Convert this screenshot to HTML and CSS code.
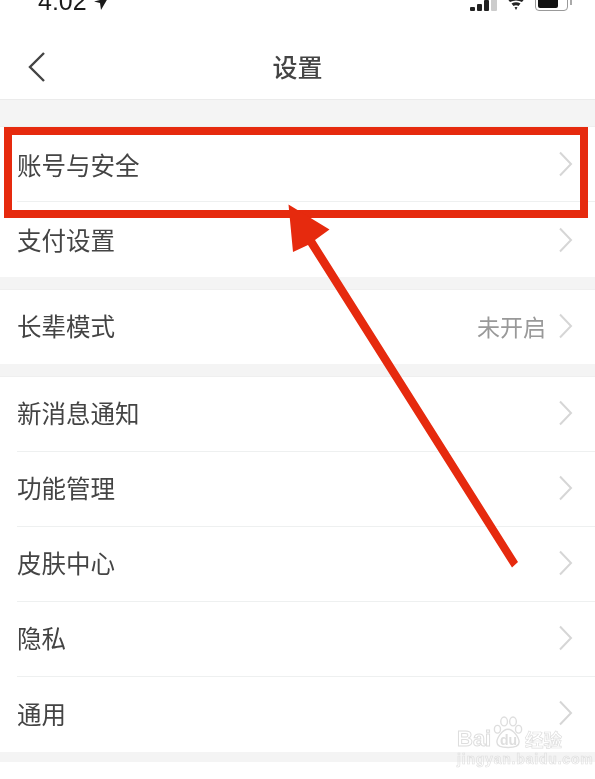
FILE: index.html
```html
<!DOCTYPE html>
<html lang="zh-CN">
<head>
    <meta charset="UTF-8">
    <title>设置</title>
    <link rel="stylesheet" href="styles.css">
</head>
<body>
    <div class="status">
        <div class="status-left">
            <span class="time">4:02</span>
            <svg class="loc" width="14" height="12" viewBox="0 0 14 12"><path d="M14 0L0 3.500 6 5 7 12z" fill="#1a1a1a"/></svg>
        </div>
        <div class="status-right">
            <svg width="27" height="12" viewBox="0 0 27 12">
                <rect x="0" y="8" width="5" height="4" rx="1" fill="#222"/>
                <rect x="7" y="5" width="5" height="7" rx="1" fill="#222"/>
                <rect x="14" y="1" width="5" height="11" rx="1" fill="#222"/>
                <rect x="21" y="0" width="6" height="12" rx="1" fill="#ccc"/>
            </svg>
            <svg class="wifi" width="18" height="11" viewBox="0 0 18 11">
                <path d="M1 0.500Q9 -3 17 0.500L15 3Q9 0 3 3z" fill="#222"/>
                <path d="M4.500 4.500Q9 2 13.500 4.500L11.500 7Q9 5.700 6.500 7z" fill="#222"/>
                <path d="M7.500 8.300Q9 7.500 10.500 8.300L9 11z" fill="#222"/>
            </svg>
            <div class="battery"><div class="battery-fill"></div></div>
        </div>
    </div>

    <div class="nav">
        <svg class="back" width="18" height="30" viewBox="0 0 18 30"><path d="M16 1L2 15 16 29" fill="none" stroke="#444" stroke-width="2.400"/></svg>
        <div class="nav-title">设置</div>
    </div>

    <div class="group first">
        <div class="row"><span>账号与安全</span><svg class="chev" width="15" height="26" viewBox="0 0 15 26"><path d="M2 1.500L13 13 2 24.500" fill="none" stroke="#d6d6d6" stroke-width="2"/></svg></div>
        <div class="row"><span>支付设置</span><svg class="chev" width="15" height="26" viewBox="0 0 15 26"><path d="M2 1.500L13 13 2 24.500" fill="none" stroke="#d6d6d6" stroke-width="2"/></svg></div>
    </div>

    <div class="group single">
        <div class="row"><span>长辈模式</span><span class="value">未开启</span><svg class="chev" width="15" height="26" viewBox="0 0 15 26"><path d="M2 1.500L13 13 2 24.500" fill="none" stroke="#d6d6d6" stroke-width="2"/></svg></div>
    </div>

    <div class="group">
        <div class="row"><span>新消息通知</span><svg class="chev" width="15" height="26" viewBox="0 0 15 26"><path d="M2 1.500L13 13 2 24.500" fill="none" stroke="#d6d6d6" stroke-width="2"/></svg></div>
        <div class="row"><span>功能管理</span><svg class="chev" width="15" height="26" viewBox="0 0 15 26"><path d="M2 1.500L13 13 2 24.500" fill="none" stroke="#d6d6d6" stroke-width="2"/></svg></div>
        <div class="row"><span>皮肤中心</span><svg class="chev" width="15" height="26" viewBox="0 0 15 26"><path d="M2 1.500L13 13 2 24.500" fill="none" stroke="#d6d6d6" stroke-width="2"/></svg></div>
        <div class="row"><span>隐私</span><svg class="chev" width="15" height="26" viewBox="0 0 15 26"><path d="M2 1.500L13 13 2 24.500" fill="none" stroke="#d6d6d6" stroke-width="2"/></svg></div>
        <div class="row"><span>通用</span><svg class="chev" width="15" height="26" viewBox="0 0 15 26"><path d="M2 1.500L13 13 2 24.500" fill="none" stroke="#d6d6d6" stroke-width="2"/></svg></div>
    </div>
    <div class="bottom"></div>

    <!-- red marks drawn over the screenshot -->
    <div class="mark-box"></div>
    <svg class="mark-arrow" width="595" height="779" viewBox="0 0 595 779">
        <path d="M288.500 204.500L329.500 229.500 315 240 518 562 512 567.500 308 245 293 252z" fill="#e62a0e"/>
    </svg>

    <!-- watermark -->
    <div class="wm">
        <div class="wm-top">
            <span class="wm-bai">Bai</span>
            <svg class="wm-paw" width="30" height="34" viewBox="0 0 54 58" fill="none" stroke="#dedede" stroke-width="2.500">
                <ellipse cx="8" cy="24" rx="5.500" ry="7"/>
                <ellipse cx="20" cy="10" rx="6" ry="8"/>
                <ellipse cx="36" cy="10" rx="6" ry="8"/>
                <ellipse cx="46" cy="24" rx="5.500" ry="7"/>
                <path d="M27 24C17 24 7 40 7 47 7 54 14 57 27 57 40 57 47 54 47 47 47 40 37 24 27 24z"/>
            </svg>
            <span class="wm-du">du</span>
            <span class="wm-cn">经验</span>
        </div>
        <div class="wm-url">jingyan.baidu.com</div>
    </div>
</body>
</html>
```

FILE: styles.css
```css
html {
    background-color: #fff;
}
body {
    margin: 0;
    width: 595px;
    height: 779px;
    overflow: hidden;
    position: relative;
    background: linear-gradient(#f4f4f4, #f4f4f4) 0 99px / 595px 663px no-repeat, #fff;
    font-family: "Noto Sans CJK SC", "Liberation Sans", sans-serif;
    color: #444;
    filter: blur(0.4px);
}
.status {
    height: 14px;
    background-color: #fff;
    display: flex;
    justify-content: space-between;
    align-items: flex-end;
    overflow: hidden;
    padding: 0 27px 0 38px;
}
.status-left {
    display: flex;
    align-items: flex-end;
    gap: 7px;
}
.time {
    font-family: "Liberation Sans", sans-serif;
    font-size: 25px;
    line-height: 25px;
    color: #1a1a1a;
    flex-shrink: 0;
}
.loc {
    flex-shrink: 0;
    margin-bottom: 4px;
}
.status-right {
    display: flex;
    align-items: flex-end;
    gap: 10px;
    margin-bottom: 3px;
}
.wifi {
    flex-shrink: 0;
    margin-bottom: 1px;
}
.battery {
    width: 33px;
    height: 20px;
    box-sizing: border-box;
    border: 1.5px solid #999;
    border-radius: 4px;
    padding: 2px;
    display: flex;
    flex-shrink: 0;
    position: relative;
}
.battery::after {
    content: "";
    position: absolute;
    right: -5px;
    top: 5px;
    width: 2px;
    height: 8px;
    background-color: #aaa;
}
.battery-fill {
    width: 20px;
    background-color: #111;
    border-radius: 2px;
}
.nav {
    height: 86px;
    padding: 21px 0 0 28px;
    box-sizing: border-box;
    display: flex;
    align-items: center;
    position: relative;
    background-color: #fff;
    border-bottom: 1px solid #ebebeb;
}
.nav-title {
    position: absolute;
    left: 0;
    right: 0;
    text-align: center;
    font-size: 25px;
    font-weight: 500;
    color: #444;
    padding-bottom: 3px;
}
.group {
    margin-top: 12px;
    border-top: 1px solid #efefef;
    background-color: #fff;
}
.group.first {
    margin-top: 26px;
}
.row {
    height: 75px;
    margin-left: 17px;
    padding: 0 22px 3px 0;
    box-sizing: border-box;
    display: flex;
    align-items: center;
    font-size: 24.5px;
    border-bottom: 1px solid #eef0f0;
}
.group.first .row {
    padding-bottom: 0;
}
.group.single .row {
    height: 74px;
}
.group .row:last-child {
    border-bottom: none;
}
.group:last-of-type .row:last-child {
    height: 73px;
}
.value {
    margin-left: auto;
    margin-right: 12px;
    font-size: 23px;
    color: #999;
}
.row .chev {
    flex-shrink: 0;
    margin-left: auto;
}
.row .value + .chev {
    margin-left: 0;
}
.bottom {
    height: 12px;
}
.mark-box {
    position: absolute;
    left: 4px;
    top: 127px;
    width: 584px;
    height: 91px;
    box-sizing: border-box;
    border: 8px solid #e62a0e;
}
.mark-arrow {
    position: absolute;
    left: 0;
    top: 0;
}
.wm {
    position: absolute;
    left: 457px;
    top: 715px;
    width: 105px;
}
.wm-top {
    display: flex;
    align-items: flex-end;
    height: 35px;
    position: relative;
}
.wm-bai {
    font-family: "Liberation Sans", sans-serif;
    font-weight: 700;
    font-size: 22px;
    line-height: 22px;
    color: transparent;
    -webkit-text-stroke: 1px #dedede;
}
.wm-paw {
    position: absolute;
    left: 36px;
    top: 0;
}
.wm-du {
    position: absolute;
    left: 43px;
    bottom: 3px;
    font-family: "Liberation Sans", sans-serif;
    font-weight: 700;
    font-size: 14px;
    line-height: 14px;
    color: #dedede;
}
.wm-cn {
    margin-left: auto;
    font-size: 18.5px;
    line-height: 22px;
    font-weight: 700;
    color: transparent;
    -webkit-text-stroke: 0.7px #dedede;
}
.wm-url {
    font-family: "Liberation Sans", sans-serif;
    font-size: 14px;
    line-height: 15px;
    font-weight: 700;
    letter-spacing: 0.8px;
    white-space: nowrap;
    color: transparent;
    -webkit-text-stroke: 0.6px #dedede;
    margin-top: 2px;
}
```
